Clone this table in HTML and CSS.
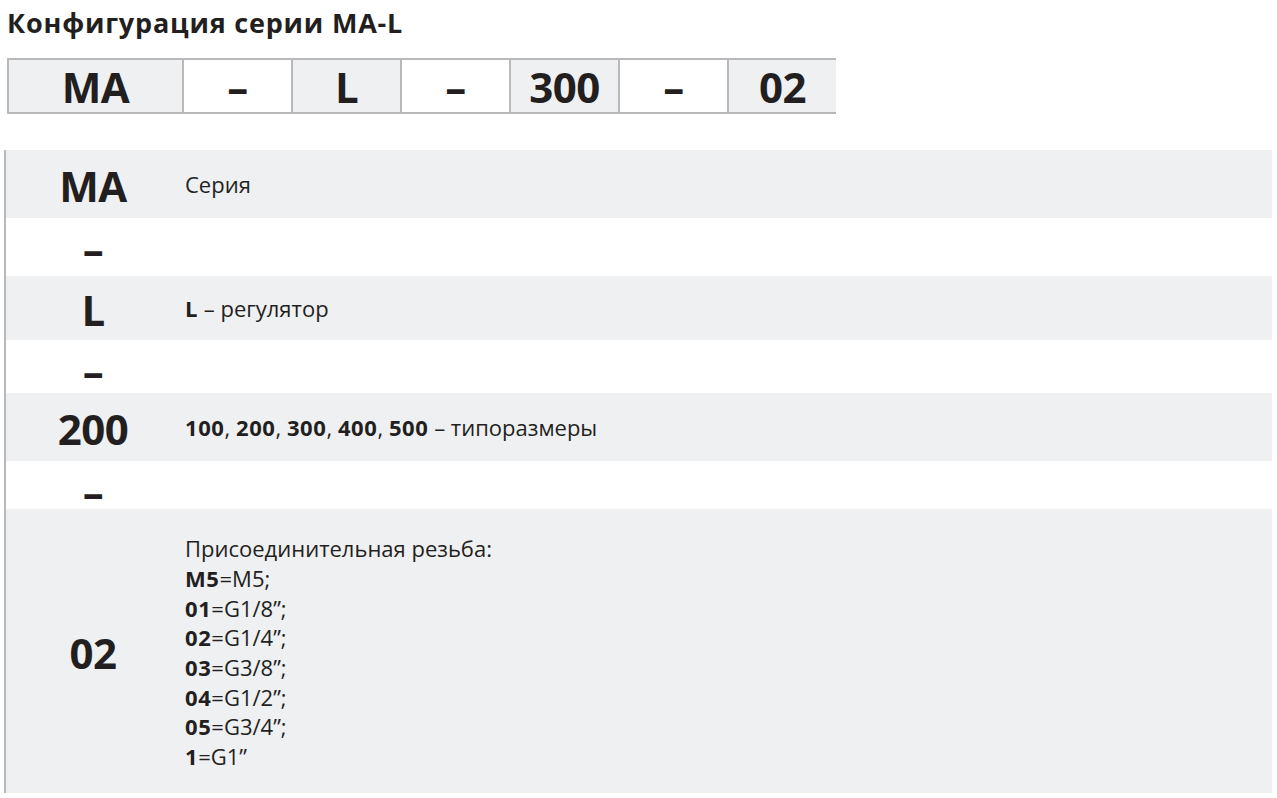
FILE: index.html
```html
<!DOCTYPE html>
<html lang="ru">
<head>
<meta charset="utf-8">
<title>Конфигурация серии MA-L</title>
<link rel="stylesheet" href="styles.css">
</head>
<body>
<h1 class="title">Конфигурация серии MA-L</h1>
<div class="code">
  <div class="code-cell shaded">MA</div>
  <div class="code-cell">–</div>
  <div class="code-cell shaded">L</div>
  <div class="code-cell">–</div>
  <div class="code-cell shaded">300</div>
  <div class="code-cell">–</div>
  <div class="code-cell shaded">02</div>
</div>
<div class="spec">
  <div class="row shaded r1"><div class="key">MA</div><div class="desc">Серия</div></div>
  <div class="row r2"><div class="key">–</div><div class="desc"></div></div>
  <div class="row shaded r3"><div class="key">L</div><div class="desc"><b>L</b> – регулятор</div></div>
  <div class="row r4"><div class="key">–</div><div class="desc"></div></div>
  <div class="row shaded r5"><div class="key">200</div><div class="desc"><b>100</b>, <b>200</b>, <b>300</b>, <b>400</b>, <b>500</b> – типоразмеры</div></div>
  <div class="row r6"><div class="key">–</div><div class="desc"></div></div>
  <div class="row shaded r7"><div class="key">02</div><div class="desc list">Присоединительная резьба:<br><b>M5</b>=M5;<br><b>01</b>=G1/8”;<br><b>02</b>=G1/4”;<br><b>03</b>=G3/8”;<br><b>04</b>=G1/2”;<br><b>05</b>=G3/4”;<br><b>1</b>=G1”</div></div>
</div>
</body>
</html>
```
FILE: styles.css
```css
* { box-sizing: border-box; }
body {
  margin: 0;
  background: #fff;
  color: #231f20;
  font-family: "Open Sans", "Liberation Sans", sans-serif;
}
.title {
  margin: 0;
  padding: 5px 0 0 7px;
  height: 58px;
  font-size: 27px;
  font-weight: 700;
  letter-spacing: 0.8px;
  line-height: 36px;
}
.code {
  display: flex;
  margin-left: 7px;
  width: 829px;
  height: 56px;
  border: 2px solid #b9b9bb;
}
.code-cell {
  flex: 0 0 109px;
  display: flex;
  align-items: center;
  justify-content: center;
  font-size: 42px;
  font-weight: 700;
  letter-spacing: -0.5px;
  border-left: 2px solid #b9b9bb;
  background: #fff;
  padding-top: 1px;
}
.code-cell:first-child { flex-basis: 173px; border-left: none; }
.code-cell.shaded { background: #eff0f2; }
.spec {
  margin: 36px 0 0 4px;
  width: 1268px;
  border-left: 2px solid #b9b9bb;
}
.row {
  display: grid;
  grid-template-columns: 174px 1fr;
  align-items: center;
  background: #fff;
}
.row.shaded { background: #eff0f2; }
.r1 { height: 68px; }
.r2 { height: 58px; }
.r3 { height: 64px; }
.r4 { height: 53px; }
.r5 { height: 68px; }
.r6 { height: 48px; }
.r7 { height: 284px; }
.key {
  text-align: center;
  font-size: 42px;
  font-weight: 700;
  letter-spacing: -0.5px;
  padding-top: 2px;
}
.desc {
  padding-left: 5px;
  font-size: 22px;
  letter-spacing: 0;
  line-height: 29.7px;
  padding-top: 2px;
}
.desc b { font-weight: 700; letter-spacing: 0.6px; }
.list { padding-top: 4px; }
```
